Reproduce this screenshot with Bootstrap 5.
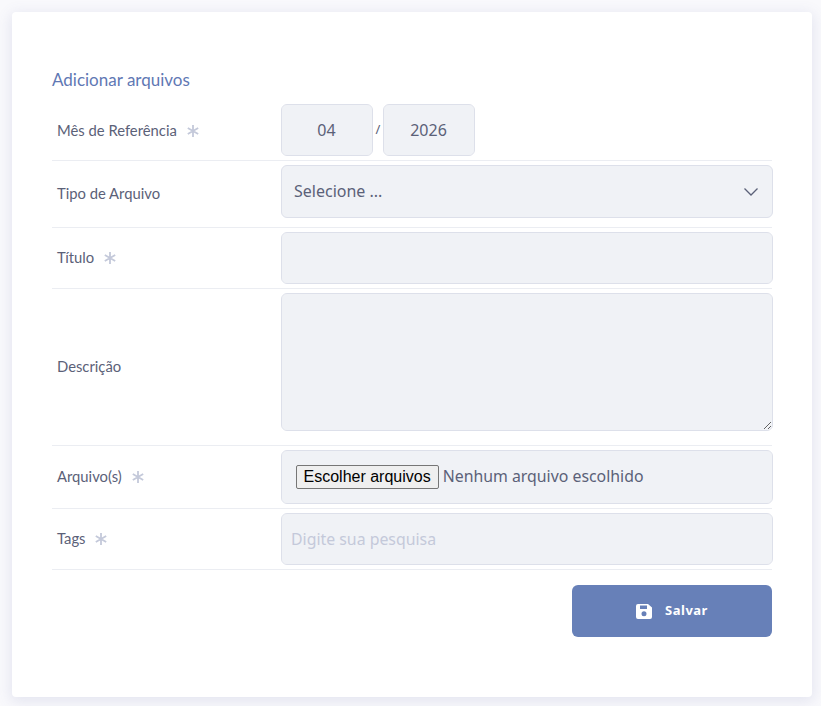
<!DOCTYPE html>
<html lang="pt-BR">
<head>
<meta charset="utf-8">
<title>Adicionar arquivos</title>
<link href="https://cdn.jsdelivr.net/npm/bootstrap@5.3.0/dist/css/bootstrap.min.css" rel="stylesheet">
<style>
html,body{height:706px;overflow:hidden}
body{background:#f9f9fc;font-family:Lato,"Liberation Sans",sans-serif;color:#5b6178}
.sheet{margin:12px 9px 0 12px;height:685px;background:#fff;border-radius:4px;box-shadow:0 3px 14px 2px rgba(90,100,160,.13);padding:58px 40px 0}
.sheet-title{font-size:17px;line-height:20px;color:#5f78b4;font-weight:400;margin:0 0 14px}
.frow{display:flex;align-items:center;border-bottom:1px solid #ebedf2;width:720px}
.flabel{flex:0 0 229px;margin:0;padding:0 0 2px 5px;font-size:14.8px;line-height:20px;color:#5b6178}
.frow:first-child .flabel{padding-bottom:5px}
.star{margin-left:5px;display:inline-block;vertical-align:-2px}
.ffield{flex:0 0 492px;margin-right:-1px;padding:4px 0}
.frow:first-child .ffield{padding-top:0}
.frow.pb9 .ffield{padding-bottom:9px}
.frow.pb14 .ffield{padding-bottom:14px}
.form-control.fbox,.form-select.fbox{background-color:#f0f2f6;border:1px solid #dde0ea;border-radius:6px;font-family:"Noto Sans",sans-serif;font-size:16px;color:#5b6178;box-shadow:none}
.form-control.fbox{height:52px;padding-left:9px}
.form-select.fbox{height:53px;padding:0 12px 1px;background-size:16px 10px;background-position:right 13px center;background-image:url("data:image/svg+xml,%3Csvg xmlns='http://www.w3.org/2000/svg' viewBox='0 0 16 10'%3E%3Cpath d='M1.500 1.500 8 8l6.500-6.500' fill='none' stroke='%235b6178' stroke-width='1.300'/%3E%3C/svg%3E")}
.form-control.fbox.datebox{width:92px;text-align:center;padding:0 13px 0 12px}
.slash{font-size:13px;color:#5b6178;width:10px;text-align:center;font-family:"Noto Sans",sans-serif}
.form-control.fbox.areabox{height:138px;display:block;resize:vertical}
.form-control.fbox.filebox{height:54px;padding:14px;display:flex;align-items:center;gap:4px;font-size:15.85px}
.filebtn{font-family:"Liberation Sans",sans-serif;font-size:16px;line-height:20px;height:24px;padding:1px 7px 0 6.500px;color:#000;background:#efefef;border:1px solid #767676;border-radius:2px}
.form-control.fbox::placeholder{color:#c4c9da;font-size:15.85px}
.btn.savebtn{display:flex;align-items:center;justify-content:center;gap:13px;width:200px;height:52px;margin:15px 0 0 520px;background:#6780b8;border:0;border-radius:6px;color:#fff;font-family:"Noto Sans",sans-serif;font-size:13px;font-weight:700;letter-spacing:.5px;padding:0}
</style>
</head>
<body>
<div class="sheet">
  <h5 class="sheet-title">Adicionar arquivos</h5>
  <form>
    <div class="frow">
      <label class="flabel">Mês de Referência <svg class="star" width="14" height="14" viewBox="0 0 14 14"><path d="M7 1v12M1.800 4l10.400 6M12.200 4 1.800 10" stroke="#c4c9da" stroke-width="1.800" fill="none"/></svg></label>
      <div class="ffield d-flex align-items-center">
        <input class="form-control fbox datebox" value="04">
        <span class="slash">/</span>
        <input class="form-control fbox datebox" value="2026">
      </div>
    </div>
    <div class="frow pb9">
      <label class="flabel">Tipo de Arquivo</label>
      <div class="ffield">
        <select class="form-select fbox"><option>Selecione ...</option></select>
      </div>
    </div>
    <div class="frow">
      <label class="flabel">Título <svg class="star" width="14" height="14" viewBox="0 0 14 14"><path d="M7 1v12M1.800 4l10.400 6M12.200 4 1.800 10" stroke="#c4c9da" stroke-width="1.800" fill="none"/></svg></label>
      <div class="ffield"><input class="form-control fbox"></div>
    </div>
    <div class="frow pb14">
      <label class="flabel">Descrição</label>
      <div class="ffield"><textarea class="form-control fbox areabox"></textarea></div>
    </div>
    <div class="frow">
      <label class="flabel">Arquivo(s) <svg class="star" width="14" height="14" viewBox="0 0 14 14"><path d="M7 1v12M1.800 4l10.400 6M12.200 4 1.800 10" stroke="#c4c9da" stroke-width="1.800" fill="none"/></svg></label>
      <div class="ffield"><div class="form-control fbox filebox"><span class="filebtn">Escolher arquivos</span><span>Nenhum arquivo escolhido</span></div></div>
    </div>
    <div class="frow">
      <label class="flabel">Tags <svg class="star" width="14" height="14" viewBox="0 0 14 14"><path d="M7 1v12M1.800 4l10.400 6M12.200 4 1.800 10" stroke="#c4c9da" stroke-width="1.800" fill="none"/></svg></label>
      <div class="ffield"><input class="form-control fbox" placeholder="Digite sua pesquisa"></div>
    </div>
    <button type="button" class="btn savebtn">
      <svg width="16" height="15" viewBox="0 0 16 15"><path fill="#fff" fill-rule="evenodd" d="M2 0h10l4 3.500V13a2 2 0 0 1-2 2H2a2 2 0 0 1-2-2V2a2 2 0 0 1 2-2zM4 1.500v3.500h7V1.500zM8 7.200a2.500 2.500 0 1 0 0 5 2.500 2.500 0 0 0 0-5z"/></svg>
      <span>Salvar</span>
    </button>
  </form>
</div>
<script src="https://cdn.jsdelivr.net/npm/bootstrap@5.3.0/dist/js/bootstrap.bundle.min.js"></script>
</body>
</html>
